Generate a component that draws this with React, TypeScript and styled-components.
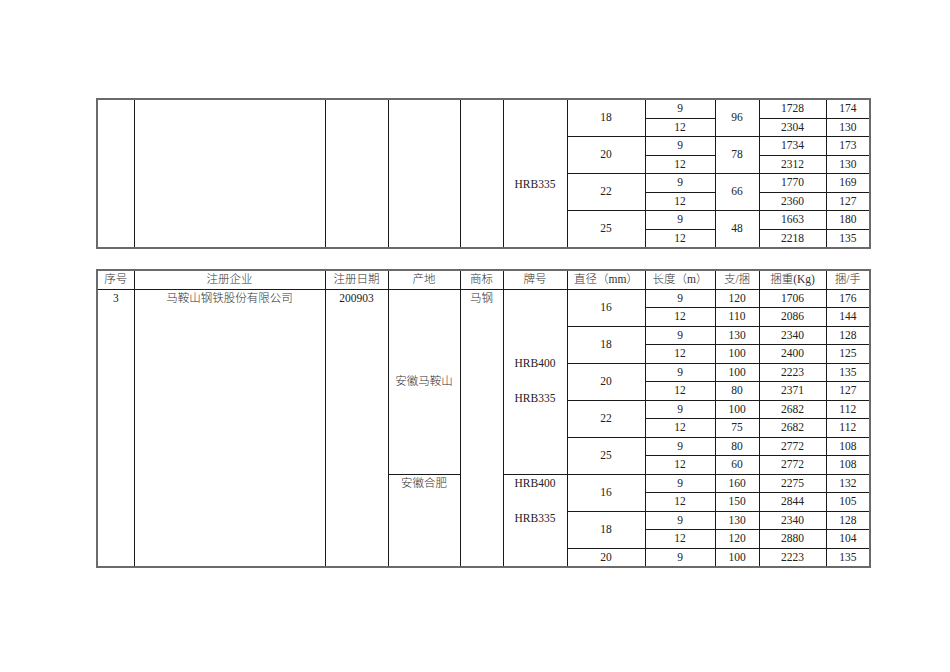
import React from "react";
import styled, { createGlobalStyle } from "styled-components";

const Global = createGlobalStyle`
  html, body { margin: 0; padding: 0; background: #fff; }
  body { font-family: "Liberation Serif", "Noto Sans CJK SC", serif; color: #222; }
`;

const Page = styled.div`
  display: flex;
  flex-direction: column;
  gap: 20px;
  padding: 98px 0 0 96px;
  width: 773px;
`;

const Table = styled.table`
  border-collapse: collapse;
  table-layout: fixed;
  width: 773px;
  border: 2px solid #6a6a6a;
  font-family: "Liberation Serif", "Times New Roman", "Noto Sans CJK SC", serif;
  font-size: 11.5px;
  color: #222;
`;

const Row = styled.tr<{ $h: number }>`
  height: ${(p) => p.$h}px;
`;

const Cell = styled.td<{ $top?: boolean; $pt?: number }>`
  border: 1px solid #1a1a1a;
  padding: ${(p) => p.$pt ?? 0}px 0 0 0;
  text-align: center;
  vertical-align: ${(p) => (p.$top ? "top" : "middle")};
  font-family: "Liberation Serif", "Times New Roman", "Noto Sans CJK SC", serif;
  font-size: 11.5px;
  line-height: 17.5px;
  white-space: nowrap;
  overflow: hidden;
`;

const Head = styled(Cell)`
  font-weight: normal;
  color: #333;
`;

const Han = styled.span`
  font-weight: 300;
  color: #333;
`;

const Line = styled.div`
  height: 17.5px;
  line-height: 17.5px;
`;

const widths = [37, 191, 63, 72, 43, 64, 78, 70, 44, 67, 44];

const Cols = () => (
  <colgroup>
    {widths.map((w, i) => (
      <col key={i} style={{ width: w }} />
    ))}
  </colgroup>
);

const t1 = [
  { d: 18, z: 96, r: [[9, 1728, 174], [12, 2304, 130]] },
  { d: 20, z: 78, r: [[9, 1734, 173], [12, 2312, 130]] },
  { d: 22, z: 66, r: [[9, 1770, 169], [12, 2360, 127]] },
  { d: 25, z: 48, r: [[9, 1663, 180], [12, 2218, 135]] },
];

type G = { d: number; r: number[][] };
const g1: G[] = [
  { d: 16, r: [[9, 120, 1706, 176], [12, 110, 2086, 144]] },
  { d: 18, r: [[9, 130, 2340, 128], [12, 100, 2400, 125]] },
  { d: 20, r: [[9, 100, 2223, 135], [12, 80, 2371, 127]] },
  { d: 22, r: [[9, 100, 2682, 112], [12, 75, 2682, 112]] },
  { d: 25, r: [[9, 80, 2772, 108], [12, 60, 2772, 108]] },
];
const g2: G[] = [
  { d: 16, r: [[9, 160, 2275, 132], [12, 150, 2844, 105]] },
  { d: 18, r: [[9, 130, 2340, 128], [12, 120, 2880, 104]] },
  { d: 20, r: [[9, 100, 2223, 135]] },
];

const Grades = () => (
  <>
    <Line>HRB400</Line>
    <Line />
    <Line>HRB335</Line>
  </>
);

function TableOne() {
  const rows: React.ReactNode[] = [];
  t1.forEach((g, gi) => {
    g.r.forEach((r, ri) => {
      const first = gi === 0 && ri === 0;
      rows.push(
        <Row $h={18.5} key={`${gi}-${ri}`}>
          {first && (
            <>
              <Cell rowSpan={8} />
              <Cell rowSpan={8} />
              <Cell rowSpan={8} />
              <Cell rowSpan={8} />
              <Cell rowSpan={8} />
              <Cell rowSpan={8} $pt={22}>
                HRB335
              </Cell>
            </>
          )}
          {ri === 0 && <Cell rowSpan={2}>{g.d}</Cell>}
          <Cell>{r[0]}</Cell>
          {ri === 0 && <Cell rowSpan={2}>{g.z}</Cell>}
          <Cell>{r[1]}</Cell>
          <Cell>{r[2]}</Cell>
        </Row>
      );
    });
  });
  return (
    <Table>
      <Cols />
      <tbody>{rows}</tbody>
    </Table>
  );
}

function TableTwo() {
  const rows: React.ReactNode[] = [];
  const pushGroup = (groups: G[], gIndex: number) => {
    const span = groups.reduce((a, g) => a + g.r.length, 0);
    groups.forEach((g, gi) => {
      g.r.forEach((r, ri) => {
        const firstOfBlock = gi === 0 && ri === 0;
        rows.push(
          <Row $h={18.44} key={`${gIndex}-${gi}-${ri}`}>
            {firstOfBlock && gIndex === 0 && (
              <>
                <Cell rowSpan={15} $top>
                  3
                </Cell>
                <Cell rowSpan={15} $top>
                  <Han>马鞍山钢铁股份有限公司</Han>
                </Cell>
                <Cell rowSpan={15} $top>
                  200903
                </Cell>
                <Cell rowSpan={span}>
                  <Han>安徽马鞍山</Han>
                </Cell>
                <Cell rowSpan={15} $top>
                  <Han>马钢</Han>
                </Cell>
              </>
            )}
            {firstOfBlock && gIndex === 1 && (
              <Cell rowSpan={span} $top>
                <Han>安徽合肥</Han>
              </Cell>
            )}
            {firstOfBlock && (
              <Cell rowSpan={span} $top={gIndex === 1}>
                <Grades />
              </Cell>
            )}
            {ri === 0 && <Cell rowSpan={g.r.length}>{g.d}</Cell>}
            {r.map((v, i) => (
              <Cell key={i}>{v}</Cell>
            ))}
          </Row>
        );
      });
    });
  };
  pushGroup(g1, 0);
  pushGroup(g2, 1);
  const heads = ["序号", "注册企业", "注册日期", "产地", "商标", "牌号", "直径（mm）", "长度（m）", "支/捆", "捆重(Kg)", "捆/手"];
  return (
    <Table>
      <Cols />
      <thead>
        <Row $h={18.44}>
          {heads.map((h) => (
            <Head as="th" key={h}>
              <Han>{h}</Han>
            </Head>
          ))}
        </Row>
      </thead>
      <tbody>{rows}</tbody>
    </Table>
  );
}

export default function App() {
  return (
    <>
      <Global />
      <Page>
        <TableOne />
        <TableTwo />
      </Page>
    </>
  );
}
